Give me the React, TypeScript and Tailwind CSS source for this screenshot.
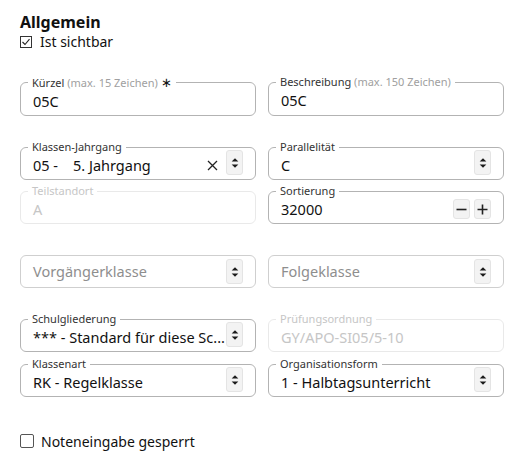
import type { ReactNode } from "react";

function SpinIcon() {
  return (
    <svg width="8" height="12" viewBox="0 0 8 12" className="text-[#1a1a1a]">
      <path d="M4 1.2 L7.3 4.6 H0.7 Z" fill="currentColor" />
      <path d="M4 10.8 L0.7 7.4 H7.3 Z" fill="currentColor" />
    </svg>
  );
}

function SpinButton() {
  return (
    <span className="ml-auto mb-[5px] flex h-[25px] w-[17px] shrink-0 items-center justify-center rounded-[3px] border border-[#e4e4e4] bg-[#f3f3f3]">
      <SpinIcon />
    </span>
  );
}

function Field({
  label,
  hint,
  required,
  disabled,
  children,
}: {
  label: string;
  hint?: string;
  required?: boolean;
  disabled?: boolean;
  children: ReactNode;
}) {
  return (
    <fieldset
      className={`min-w-0 rounded-md border px-3 pt-[1px] pb-[4px] ${
        disabled ? "border-[#e9e9e9]" : "border-[#b3b3b3]"
      }`}
    >
      <legend
        className={`ml-[-5px] px-1 text-[11px] leading-[14px] ${
          disabled ? "text-[#c6c6c6]" : "text-[#333]"
        }`}
      >
        {label}
        {hint && <span className="text-[#a0a0a0]"> {hint}</span>}
        {required && <span className="text-[13px] text-[#111]"> ∗</span>}
      </legend>
      <div
        className={`flex h-[20px] items-center text-[14.5px] leading-[20px] ${
          disabled ? "text-[#c6c6c6]" : "text-[#111]"
        }`}
      >
        {children}
      </div>
    </fieldset>
  );
}

function EmptySelect({ placeholder }: { placeholder: string }) {
  return (
    <div className="flex h-[33px] min-w-0 items-center rounded-md border border-[#cfcfcf] px-3 text-[14.5px] text-[#8e8e8e]">
      <span>{placeholder}</span>
      <span className="ml-auto flex h-[25px] w-[17px] shrink-0 items-center justify-center rounded-[3px] border border-[#e4e4e4] bg-[#f3f3f3]">
        <SpinIcon />
      </span>
    </div>
  );
}

export default function App() {
  return (
    <div className="min-h-screen bg-white px-5 pt-3 font-['Noto_Sans',sans-serif] text-[#111]">
      <h2 className="text-[16px] font-bold leading-[20px]">Allgemein</h2>
      <label className="flex h-[19px] items-center gap-[8px] text-[14px]">
        <svg width="12" height="12" viewBox="0 0 12 12" className="shrink-0">
          <rect x="0.5" y="0.5" width="11" height="11" fill="none" stroke="#333" />
          <path d="M2.5 6 L5 8.5 L9.5 3.2" fill="none" stroke="#222" strokeWidth="1.1" />
        </svg>
        Ist sichtbar
      </label>

      {/* Kürzel / Beschreibung */}
      <div className="mt-[24px] grid grid-cols-2 gap-x-3">
        <Field label="Kürzel" hint="(max. 15 Zeichen)" required>
          05C
        </Field>
        <Field label="Beschreibung" hint="(max. 150 Zeichen)">
          05C
        </Field>
      </div>

      {/* Jahrgang, Parallelität, Teilstandort, Sortierung */}
      <div className="mt-[24px] grid grid-cols-2 gap-x-3 gap-y-[4px]">
        <Field label="Klassen-Jahrgang">
          <span className="w-[40px] shrink-0">05 -</span>
          <span>5. Jahrgang</span>
          <svg width="11" height="11" viewBox="0 0 11 11" className="ml-auto mr-[8px] shrink-0">
            <path d="M1 1 L10 10 M10 1 L1 10" stroke="#222" strokeWidth="1.3" />
          </svg>
          <span className="mb-[5px] flex h-[25px] w-[17px] shrink-0 items-center justify-center rounded-[3px] border border-[#e4e4e4] bg-[#f3f3f3]">
            <SpinIcon />
          </span>
        </Field>
        <Field label="Parallelität">
          <span>C</span>
          <SpinButton />
        </Field>
        <Field label="Teilstandort" disabled>
          A
        </Field>
        <Field label="Sortierung">
          <span>32000</span>
          <span className="ml-auto flex gap-[4px]">
            <span className="flex h-[20px] w-[17px] items-center justify-center rounded-[3px] border border-[#e4e4e4] bg-[#f3f3f3]">
              <svg width="11" height="11" viewBox="0 0 11 11">
                <path d="M0.5 5.5 H10.5" stroke="#222" strokeWidth="1.6" />
              </svg>
            </span>
            <span className="flex h-[20px] w-[17px] items-center justify-center rounded-[3px] border border-[#e4e4e4] bg-[#f3f3f3]">
              <svg width="11" height="11" viewBox="0 0 11 11">
                <path d="M0.5 5.5 H10.5 M5.5 0.5 V10.5" stroke="#222" strokeWidth="1.6" />
              </svg>
            </span>
          </span>
        </Field>
      </div>

      {/* Vorgänger / Folge */}
      <div className="mt-[31px] grid grid-cols-2 gap-x-3">
        <EmptySelect placeholder="Vorgängerklasse" />
        <EmptySelect placeholder="Folgeklasse" />
      </div>

      {/* Schulgliederung, Prüfungsordnung, Klassenart, Organisationsform */}
      <div className="mt-[24px] grid grid-cols-2 gap-x-3 gap-y-[5px]">
        <Field label="Schulgliederung">
          <span className="whitespace-nowrap">*** - Standard für diese Sc...</span>
          <SpinButton />
        </Field>
        <Field label="Prüfungsordnung" disabled>
          GY/APO-SI05/5-10
        </Field>
        <Field label="Klassenart">
          <span>RK - Regelklasse</span>
          <SpinButton />
        </Field>
        <Field label="Organisationsform">
          <span>1 - Halbtagsunterricht</span>
          <SpinButton />
        </Field>
      </div>

      <label className="mt-[34px] flex h-[20px] items-center gap-[7px] text-[14px]">
        <span className="h-[14px] w-[14px] shrink-0 rounded-[2px] border border-[#555]" />
        Noteneingabe gesperrt
      </label>
    </div>
  );
}
